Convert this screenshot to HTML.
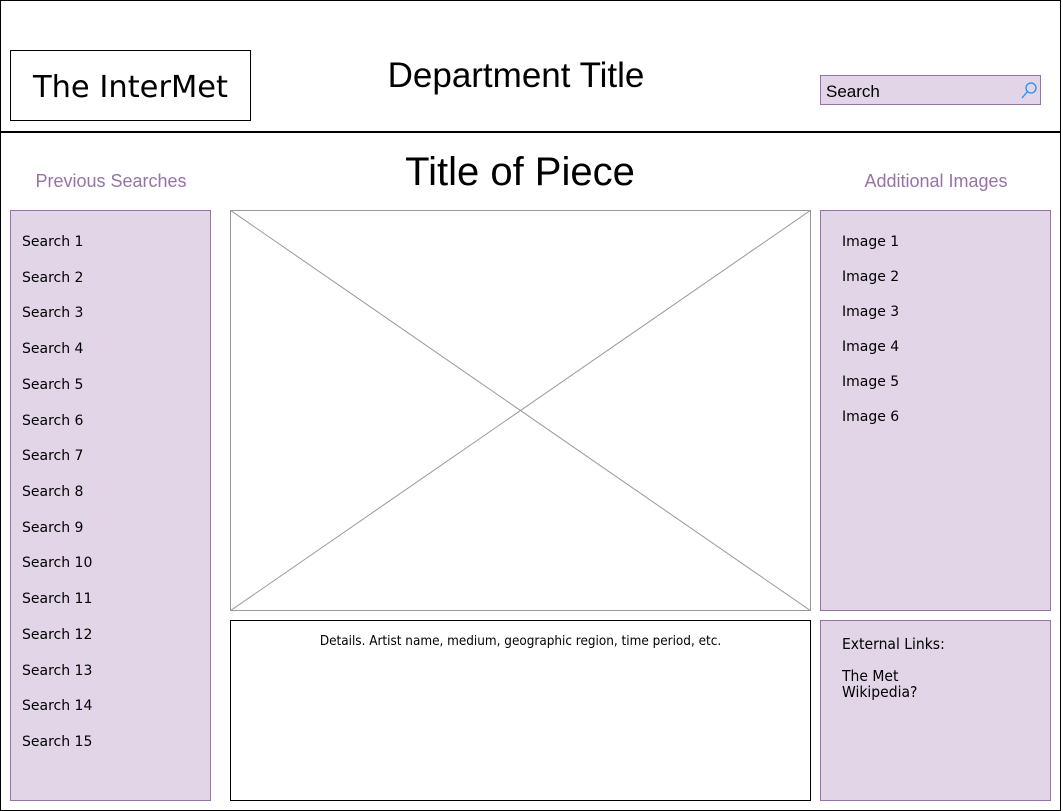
<!DOCTYPE html>
<html><head><meta charset="utf-8"><style>
*{margin:0;padding:0;box-sizing:border-box}
body{width:1063px;height:811px;background:#fff;position:relative;overflow:hidden;font-family:"DejaVu Sans",sans-serif;color:#000}
.a{position:absolute}
.p{background:#e1d5e7;border:1px solid #9673a6}
.t{position:absolute;font-size:14px;line-height:16px;white-space:nowrap}
.h{font-family:"Liberation Sans",sans-serif;color:#9673a6;font-size:18px;text-align:center}
</style></head><body>
<div class="a" style="left:0;top:0;width:1061px;height:811px;border:1px solid #000"></div>
<div class="a" style="left:0;top:131px;width:1061px;height:2px;background:#000"></div>
<div class="a" style="left:10px;top:50px;width:241px;height:71px;border:1px solid #000;font-size:30.5px;text-align:center;line-height:73px">The InterMet</div>
<div class="a" style="left:320px;top:56px;width:392px;text-align:center;font-family:'Liberation Sans',sans-serif;font-size:35px;line-height:40px">Department Title</div>
<div class="a p" style="left:820px;top:75px;width:221px;height:30px;font-family:'Liberation Sans',sans-serif;font-size:17px;line-height:31px;padding-left:5px">Search
<svg class="a" style="left:199px;top:5px" width="18" height="20" viewBox="0 0 18 20"><circle cx="11" cy="7" r="5" fill="none" stroke="#1e90ff" stroke-width="1.3"/><line x1="7.5" y1="10.5" x2="2" y2="17" stroke="#1e90ff" stroke-width="1.3"/></svg></div>
<div class="a" style="left:300px;top:149px;width:440px;text-align:center;font-family:'Liberation Sans',sans-serif;font-size:40px;line-height:46px">Title of Piece</div>
<div class="a h" style="left:10px;top:171px;width:202px">Previous Searches</div>
<div class="a h" style="left:820px;top:171px;width:232px">Additional Images</div>
<div class="a p" style="left:10px;top:210px;width:201px;height:591px"></div>
<div class="t" style="left:22px;top:234px">Search 1</div>
<div class="t" style="left:22px;top:270px">Search 2</div>
<div class="t" style="left:22px;top:305px">Search 3</div>
<div class="t" style="left:22px;top:341px">Search 4</div>
<div class="t" style="left:22px;top:377px">Search 5</div>
<div class="t" style="left:22px;top:413px">Search 6</div>
<div class="t" style="left:22px;top:448px">Search 7</div>
<div class="t" style="left:22px;top:484px">Search 8</div>
<div class="t" style="left:22px;top:520px">Search 9</div>
<div class="t" style="left:22px;top:555px">Search 10</div>
<div class="t" style="left:22px;top:591px">Search 11</div>
<div class="t" style="left:22px;top:627px">Search 12</div>
<div class="t" style="left:22px;top:663px">Search 13</div>
<div class="t" style="left:22px;top:698px">Search 14</div>
<div class="t" style="left:22px;top:734px">Search 15</div>
<svg class="a" style="left:230px;top:210px" width="581" height="401"><rect x="0.5" y="0.5" width="580" height="400" fill="#fff" stroke="#999"/><line x1="0" y1="0" x2="581" y2="401" stroke="#999"/><line x1="581" y1="0" x2="0" y2="401" stroke="#999"/></svg>
<div class="a" style="left:230px;top:620px;width:581px;height:181px;border:1px solid #000;font-family:'DejaVu Sans Condensed','DejaVu Sans',sans-serif;font-size:13.4px;text-align:center;padding-top:13px">Details. Artist name, medium, geographic region, time period, etc.</div>
<div class="a p" style="left:820px;top:210px;width:231px;height:401px"></div>
<div class="t" style="left:842px;top:234px">Image 1</div>
<div class="t" style="left:842px;top:269px">Image 2</div>
<div class="t" style="left:842px;top:304px">Image 3</div>
<div class="t" style="left:842px;top:339px">Image 4</div>
<div class="t" style="left:842px;top:374px">Image 5</div>
<div class="t" style="left:842px;top:409px">Image 6</div>
<div class="a p" style="left:820px;top:620px;width:231px;height:181px"></div>
<div class="a" style="left:842px;top:636px;font-family:'DejaVu Sans Condensed','DejaVu Sans',sans-serif;font-size:15.5px;line-height:16px">External Links:<br><br>The Met<br>Wikipedia?</div>
</body></html>
